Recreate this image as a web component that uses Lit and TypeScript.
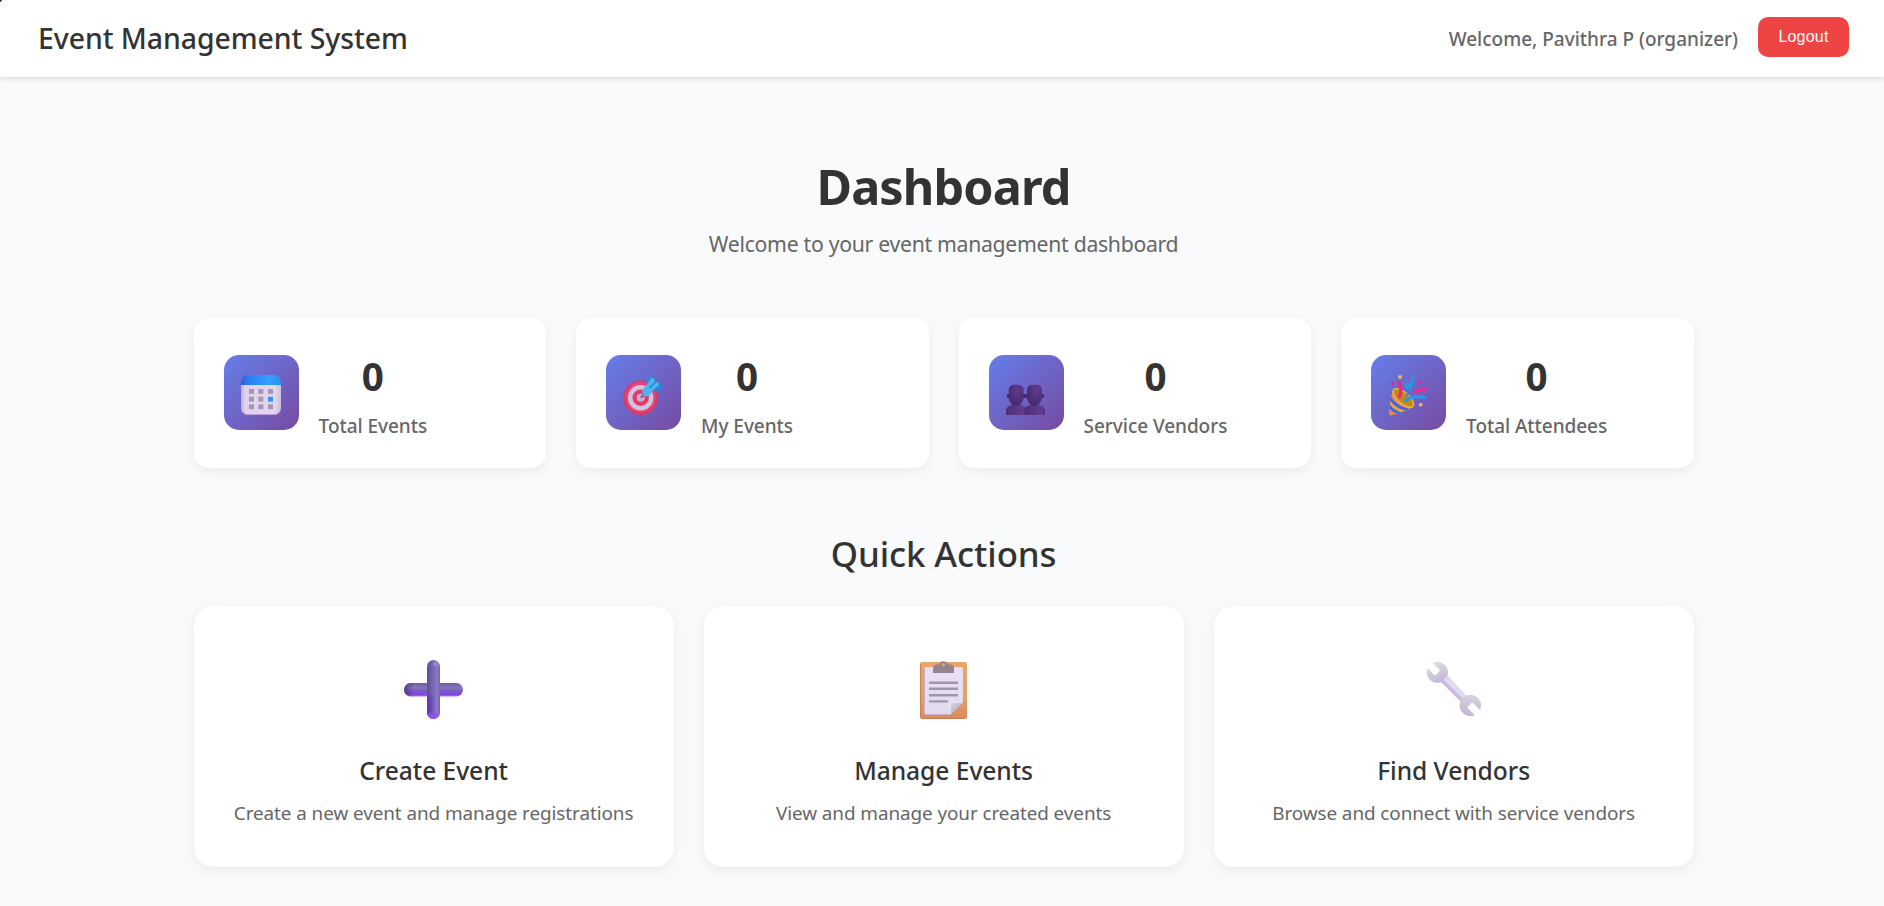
import { LitElement, html, css, svg, TemplateResult } from "lit";
import { customElement } from "lit/decorators.js";

interface Stat { label: string; value: number; icon: TemplateResult; }
interface Action { title: string; text: string; icon: TemplateResult; }

const calendar = html`<svg viewBox="0 0 75 75" class="glyph">
  <defs>
    <linearGradient id="cal-top" x1="0" x2="1" y1="0" y2="0">
      <stop offset="0" stop-color="#2f62d6"/><stop offset=".25" stop-color="#2b83f8"/><stop offset=".7" stop-color="#2fa2ff"/><stop offset="1" stop-color="#2b93ee"/>
    </linearGradient>
    <linearGradient id="cal-body" x1="0" x2="1" y1="0" y2="0">
      <stop offset="0" stop-color="#c0afd0"/><stop offset=".1" stop-color="#e0d3ec"/><stop offset=".85" stop-color="#e3d6ee"/><stop offset="1" stop-color="#cdc0dc"/>
    </linearGradient>
  </defs>
  <path d="M17 29h40v24a7 7 0 0 1-7 7H24a7 7 0 0 1-7-7z" fill="url(#cal-body)"/>
  <path d="M19 57.200q2 2.300 5 2.300h26q3 0 5-2.300" fill="none" stroke="#c19fe2" stroke-width="1"/>
  <path d="M17 30v-3a7 7 0 0 1 7-7h26a7 7 0 0 1 7 7v3z" fill="url(#cal-top)"/>
  ${[34, 41.7, 49.3].map((y, r) => [25, 34.3, 44].map((x, c) => svg`
    <rect x=${x} y=${y} width="5" height="4.900" fill=${r === 1 && c === 2 ? "#2e97f5" : "#a497b5"}/>`))}
</svg>`;

const target = html`<svg viewBox="0 0 75 75" class="glyph">
  <circle cx="34.700" cy="42.700" r="17.300" fill="#d93a64"/>
  <circle cx="34.700" cy="42.300" r="15.300" fill="#e8437a"/>
  <circle cx="34.700" cy="42.700" r="12.700" fill="#cfc3de"/>
  <circle cx="34.700" cy="42.700" r="8.200" fill="#e63868"/>
  <circle cx="34.700" cy="42.700" r="4" fill="#c3b1cf"/>
  <path d="M35.500 42l4-4" stroke="#756a86" stroke-width="2.400" stroke-linecap="round"/>
  <path d="M41 31.500l-.5-5.500 5.200-6 2.800 3.500-1 6.500z" fill="#2c8fe4"/>
  <path d="M45.500 35l1.500-5 7-2 3.300 4-4.800 4z" fill="#2785de"/>
  <path d="M36.200 36q0-2 3.300-4.500l5.500-7.500q3.500-2 3.500 1.500l1 2q4-1 3.500 2l-6.500 6.500q-2.800 5.500-6 5.500-4.300-.8-4.300-5.500z" fill="#4db5f2"/>
  <path d="M43.800 32.800l6.500-6.500" stroke="#2584da" stroke-width="1.600" stroke-linecap="round"/>
</svg>`;

const person = (x: number) => svg`<g transform="translate(${x} 0)">
  <path d="M0 60v-3.500q0-6.500 7-6.500h6.700q7 0 7 6.500V60z" fill="url(#bust)"/>
  <circle cx="2.600" cy="41" r="1.900" fill="#43276b"/><circle cx="18" cy="41" r="1.900" fill="#43276b"/>
  <path d="M2.700 35.500q0-5.800 6-5.800h3q6 0 6 5.800v7.500q-1.500 7.500-7.500 8-6-.500-7.500-8z" fill="url(#head)"/>
</g>`;
const people = html`<svg viewBox="0 0 75 75" class="glyph">
  <defs>
    <radialGradient id="head" cx=".65" cy=".25" r=".75"><stop offset="0" stop-color="#613b8c"/><stop offset="1" stop-color="#452a70"/></radialGradient>
    <linearGradient id="bust" x1="0" x2="1"><stop offset="0" stop-color="#4c2e75"/><stop offset=".8" stop-color="#643d92"/><stop offset="1" stop-color="#573382"/></linearGradient>
  </defs>
  ${person(17)}${person(35.300)}
</svg>`;

const stripes = ["#e8866a", "#3469df", "#ef9a45", "#3469df", "#e57c63", "#efa23a", "#d98b48"];
const popper = html`<svg viewBox="0 0 75 75" class="glyph">
  <defs><clipPath id="cone"><path d="M21.800 35.500Q19.500 44 18.200 57q0 4.500 4.300 2.800Q36 55.500 42.700 51.500L33 38z"/></clipPath></defs>
  <g clip-path="url(#cone)">
    <path d="M16 33h30v28H16z" fill="#efa437"/>
    ${stripes.map((c, i) => svg`<path d="M20 33.500Q23 49 45 52.500" transform="translate(${-(i + 0.6) * 1.75} ${(i + 0.6) * 2.4})" fill="none" stroke=${c} stroke-width="3.200"/>`)}
  </g>
  <ellipse cx="32.300" cy="43" rx="12.700" ry="5.600" transform="rotate(41 32.300 43)" fill="#c08a1c" stroke="#f2b441" stroke-width="1.400"/>
  <g fill="none" stroke-linecap="round">
    <path d="M28.500 41.500q3.300-7.500-.8-14" stroke="#ee267f" stroke-width="3.400"/>
    <path d="M34.500 45.500q7-5.500 19-3.200" stroke="#2d95ea" stroke-width="3.400"/>
    <path d="M44.500 37q4-3.500 10.200-2.600" stroke="#ed2c91" stroke-width="2.900"/>
    <path d="M41.600 21.500q.4 9-4.600 11.500-3-.5-1.900-3.500 3.400-3 4.400 5" stroke="#239be0" stroke-width="2.500"/>
  </g>
  <circle cx="29" cy="22" r="1.900" fill="#f4c143"/><circle cx="21.700" cy="28.700" r="1.800" fill="#d82889"/>
  <circle cx="48.700" cy="27.300" r="1.800" fill="#e02b91"/><circle cx="49.700" cy="49.700" r="1.900" fill="#f2ae58"/>
  <circle cx="36.200" cy="39.800" r="1.600" fill="#318ce0"/>
</svg>`;

const plus = html`<svg viewBox="0 0 60 60" class="art">
  <defs>
    <linearGradient id="plus-h" x1="0" x2="0" y1="0" y2="1">
      <stop offset="0" stop-color="#6f5aa5"/><stop offset=".35" stop-color="#8574bd"/><stop offset=".6" stop-color="#7b5cc2"/><stop offset=".85" stop-color="#8144e0"/><stop offset="1" stop-color="#a27ae6"/>
    </linearGradient>
    <linearGradient id="plus-v" x1="0" x2="1" y1="0" y2="0">
      <stop offset="0" stop-color="#5e4c95"/><stop offset=".55" stop-color="#7f6dba"/><stop offset=".8" stop-color="#8a79c6"/><stop offset="1" stop-color="#7664ad"/>
    </linearGradient>
    <linearGradient id="plus-low" x1="0" x2="0" y1="0" y2="1">
      <stop offset="0" stop-color="#6534c0" stop-opacity="0"/><stop offset=".15" stop-color="#6534c0" stop-opacity=".9"/><stop offset="1" stop-color="#6534c0"/>
    </linearGradient>
    <linearGradient id="plus-side" x1="0" x2="1" y1="0" y2="0"><stop offset="0" stop-color="#453170"/><stop offset="1" stop-color="#453170" stop-opacity="0"/></linearGradient>
    <linearGradient id="fade" x1="0" x2="1" y1="0" y2="0"><stop offset="0" stop-color="#fff"/><stop offset=".65" stop-color="#000"/></linearGradient>
    <mask id="left"><rect x="23" y="34" width="13" height="26" fill="url(#fade)"/></mask>
    <linearGradient id="plus-foot" x1="0" x2="0" y1="0" y2="1"><stop offset="0" stop-color="#954cf5" stop-opacity="0"/><stop offset=".6" stop-color="#954cf5"/></linearGradient>
  </defs>
  <rect x="0" y="23" width="59" height="13.500" rx="6.700" fill="url(#plus-h)"/>
  <path d="M7 23h3v13.500H6.700A6.700 6.700 0 0 1 6.700 23z" fill="url(#plus-side)" opacity=".75"/>
  <rect x="23" y="0" width="13" height="59" rx="6.500" fill="url(#plus-v)"/>
  <path d="M23 34h13v18.500a6.500 6.500 0 0 1-13 0z" fill="url(#plus-low)" mask="url(#left)"/>
  <path d="M23 52h13v.5a6.500 6.500 0 0 1-13 0z" fill="url(#plus-foot)"/>
  <ellipse cx="31.500" cy="4" rx="2.500" ry="2" fill="#a494dc" opacity=".7"/>
</svg>`;

const clipboard = html`<svg viewBox="0 0 60 60" class="art">
  <defs>
    <linearGradient id="board" x1="0" x2="0" y1="0" y2="1"><stop offset="0" stop-color="#e8a56b"/><stop offset=".6" stop-color="#e4a06c"/><stop offset="1" stop-color="#d88b59"/></linearGradient>
    <linearGradient id="sheet" x1="0" x2="0" y1="0" y2="1"><stop offset="0" stop-color="#e9e0f2"/><stop offset="1" stop-color="#e2daee"/></linearGradient>
    <linearGradient id="fold" x1="0" x2="1" y1="0" y2="1"><stop offset="0" stop-color="#dcd5e6"/><stop offset=".5" stop-color="#c0b5cf"/></linearGradient>
  </defs>
  <rect x="6" y="2" width="47" height="57" rx="2" fill="url(#board)"/>
  <path d="M6.500 4v53M7.500 58.500h44" stroke="#c97954" stroke-width="1" opacity=".8"/>
  <path d="M12 7h35a2 2 0 0 1 2 2v33.300L36 55H12a2 2 0 0 1-2-2V9a2 2 0 0 1 2-2z" fill="url(#sheet)"/>
  <path d="M10.500 9v44q0 1.500 1.500 1.500h24" stroke="#c9afc8" stroke-width="1" fill="none"/>
  <path d="M49 42.300H38a2 2 0 0 0-2 2V55z" fill="url(#fold)"/>
  <path d="M36.400 54V44.300q0-1.600 1.600-1.600h10" fill="none" stroke="#f2edf7" stroke-width=".8"/>
  <path d="M19 13V8.500Q19 5 22.500 4.500H25a4.500 4.500 0 0 1 8.700 0H36.500Q40 5 40 8.500V13z" fill="#93848f"/>
  <circle cx="29.400" cy="4.900" r="1.700" fill="#e8a56b"/>
  <g stroke="#a195ac" stroke-width="2.400" stroke-linecap="round">
    <path d="M16 22.700h27M16 28.700h27M16 35.200h27M16 41.400h17"/>
  </g>
</svg>`;

const wrench = html`<svg viewBox="0 0 60 60" class="art">
  <defs>
    <linearGradient id="shaft" gradientUnits="userSpaceOnUse" x1="26.500" y1="32.500" x2="33" y2="26">
      <stop offset="0" stop-color="#c5b2de"/><stop offset=".4" stop-color="#cbbde2"/><stop offset=".6" stop-color="#e3def0"/><stop offset="1" stop-color="#dcd5ea"/>
    </linearGradient>
    <linearGradient id="jaw-a" x1=".2" y1="0" x2=".6" y2="1"><stop offset="0" stop-color="#e0dce5"/><stop offset=".55" stop-color="#d0cad9"/><stop offset="1" stop-color="#c5b2dc"/></linearGradient>
    <linearGradient id="jaw-b" x1=".6" y1="0" x2=".4" y2="1"><stop offset="0" stop-color="#d9d2e2"/><stop offset=".5" stop-color="#cac4d3"/><stop offset="1" stop-color="#c8b5de"/></linearGradient>
    <mask id="jaws">
      <rect width="60" height="60" fill="#fff"/>
      <rect x="-14" y="-3.700" width="15" height="7.400" rx="1.200" transform="translate(13 12.300) rotate(45)" fill="#000"/>
      <rect x="-1" y="-3.700" width="15" height="7.400" rx="1.200" transform="translate(46.400 45.500) rotate(45)" fill="#000"/>
    </mask>
  </defs>
  <g mask="url(#jaws)">
    <circle cx="13.500" cy="12.500" r="10.600" fill="url(#jaw-a)"/>
    <path d="M17 22l6.500-6.500L43.500 37l-6 5.500z" fill="url(#shaft)"/>
    <circle cx="46.300" cy="45.400" r="10.700" fill="url(#jaw-b)"/>
  </g>
</svg>`;

const stats: Stat[] = [
  { label: "Total Events", value: 0, icon: calendar },
  { label: "My Events", value: 0, icon: target },
  { label: "Service Vendors", value: 0, icon: people },
  { label: "Total Attendees", value: 0, icon: popper },
];

const actions: Action[] = [
  { title: "Create Event", text: "Create a new event and manage registrations", icon: plus },
  { title: "Manage Events", text: "View and manage your created events", icon: clipboard },
  { title: "Find Vendors", text: "Browse and connect with service vendors", icon: wrench },
];

@customElement("app-root")
export class AppRoot extends LitElement {
  static styles = css`
    :host {
      display: block;
      min-height: 100vh;
      background: #f9fafc;
      color: #333;
      font-family: "Segoe UI", "Noto Sans", sans-serif;
    }
    * { box-sizing: border-box; }
    h1, h2, h3, p { margin: 0; }
    header {
      position: relative;
      display: flex;
      align-items: center;
      justify-content: space-between;
      height: 77px;
      padding: 0 35px 0 38px;
      background: #fff;
      box-shadow: 0 2px 5px rgba(0, 0, 0, 0.12);
    }
    header::before {
      content: "";
      position: absolute;
      left: 0;
      top: 0;
      width: 2px;
      height: 2px;
      background: linear-gradient(135deg, #444 50%, transparent 50%);
    }
    .brand { margin-bottom: 2px; font-size: 28.4px; font-weight: 500; line-height: 40px; letter-spacing: -0.05px; }
    .user { display: flex; align-items: center; gap: 20px; }
    .welcome { font-size: 19px; font-weight: 500; line-height: 28px; color: #666; }
    .logout {
      width: 91px;
      height: 40px;
      margin-bottom: 3px;
      padding: 0;
      border: 0;
      border-radius: 10px;
      background: #ef4444;
      color: #fff;
      font: 16px/20px "Liberation Sans", Arial, sans-serif;
      letter-spacing: 0.2px;
    }
    main { width: 1500px; margin-left: 193.6px; padding-top: 79px; text-align: center; }
    h1 { font-size: 48.5px; font-weight: 700; line-height: 60px; letter-spacing: -0.85px; }
    .lead { margin-top: 13px; font-size: 21.2px; line-height: 30px; letter-spacing: -0.28px; color: #666; }
    .stats { display: grid; grid-template-columns: repeat(4, 1fr); gap: 30px; margin-top: 59px; }
    .stat {
      display: flex;
      align-items: center;
      gap: 20px;
      height: 150px;
      padding: 0 30px 1px;
      border-radius: 15px;
      background: #fff;
      box-shadow: 0 4px 12px rgba(0, 0, 0, 0.06);
    }
    .tile {
      width: 75px;
      height: 75px;
      border-radius: 15px;
      background: linear-gradient(135deg, #667eea, #764ba2);
    }
    .glyph { display: block; width: 75px; height: 75px; }
    .figures { padding-top: 7px; }
    .value { font-size: 38.6px; font-weight: 700; line-height: 48px; }
    .label { margin-top: 12px; font-size: 19px; font-weight: 500; line-height: 28px; letter-spacing: -0.05px; color: #666; }
    h2 { margin: 62px 0 28px; font-size: 34.8px; font-weight: 500; line-height: 48px; letter-spacing: -0.08px; }
    .actions { display: grid; grid-template-columns: repeat(3, 1fr); gap: 30px; }
    .action {
      display: flex;
      flex-direction: column;
      align-items: center;
      height: 261px;
      padding-top: 54px;
      border-radius: 20px;
      background: #fff;
      box-shadow: 0 4px 15px rgba(0, 0, 0, 0.06);
    }
    .art { display: block; width: 60px; height: 60px; overflow: visible; }
    h3 { margin-top: 34px; font-size: 24.6px; font-weight: 500; line-height: 34px; letter-spacing: -0.05px; }
    .text { margin-top: 10px; font-size: 18.9px; line-height: 30px; letter-spacing: -0.08px; color: #666; }
  `;

  render() {
    return html`
      <header>
        <div class="brand">Event Management System</div>
        <div class="user">
          <span class="welcome">Welcome, Pavithra P (organizer)</span>
          <button class="logout">Logout</button>
        </div>
      </header>
      <main>
        <h1>Dashboard</h1>
        <p class="lead">Welcome to your event management dashboard</p>
        <section class="stats">
          ${stats.map((s) => html`
            <div class="stat">
              <div class="tile">${s.icon}</div>
              <div class="figures">
                <div class="value">${s.value}</div>
                <div class="label">${s.label}</div>
              </div>
            </div>`)}
        </section>
        <h2>Quick Actions</h2>
        <section class="actions">
          ${actions.map((a) => html`
            <div class="action">
              ${a.icon}
              <h3>${a.title}</h3>
              <p class="text">${a.text}</p>
            </div>`)}
        </section>
      </main>
    `;
  }
}
